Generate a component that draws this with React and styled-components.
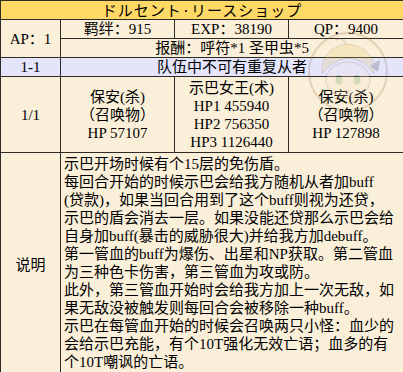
import React from 'react';
import styled, { createGlobalStyle } from 'styled-components';

const GlobalStyle = createGlobalStyle`
    body {
        margin: 0;
        background: #fff;
        font-family: "Liberation Serif", "Noto Sans CJK SC", serif;
    }
`;

const Wrap = styled.div`
    position: relative;
    width: 403px;
`;

const Table = styled.table`
    width: 403px;
    border-collapse: collapse;
    table-layout: fixed;
    font-size: 15px;
    line-height: 18px;
    color: #000;
    background: #faefd9;

    td {
        border: 1px solid #2e2a24;
        padding: 0;
        text-align: center;
        vertical-align: middle;
    }
`;

const TitleCell = styled.td`
    background: #ffd966;
    height: 17px;
    font-family: "Noto Sans CJK JP", sans-serif;
    letter-spacing: 1px;
`;

const Row = styled.tr`
    height: ${props => props.h}px;
    background: ${props => (props.stage ? '#e4e4fb' : 'transparent')};
`;

const Lines = styled.div`
    display: flex;
    flex-direction: column;
    align-items: center;
`;

const DescCell = styled.td`
    && {
        text-align: left;
        vertical-align: top;
        padding: 2px 2px 6px 3px;
    }
`;

const Line = styled.div`
    white-space: nowrap;
`;

const Watermark = styled.svg`
    position: absolute;
    left: 306px;
    top: 30px;
    pointer-events: none;
    opacity: 0.22;
`;

const desc = [
    '示巴开场时候有个15层的免伤盾。',
    '每回合开始的时候示巴会给我方随机从者加buff',
    '(贷款)，如果当回合用到了这个buff则视为还贷，',
    '示巴的盾会消去一层。如果没能还贷那么示巴会给',
    '自身加buff(暴击的威胁很大)并给我方加debuff。',
    '第一管血的buff为爆伤、出星和NP获取。第二管血',
    '为三种色卡伤害，第三管血为攻或防。',
    '此外，第三管血开始时会给我方加上一次无敌，如',
    '果无敌没被触发则每回合会被移除一种buff。',
    '示巴在每管血开始的时候会召唤两只小怪：血少的',
    '会给示巴充能，有个10T强化无效亡语；血多的有',
    '个10T嘲讽的亡语。',
];

const enemies = [
    ['保安(杀)', '（召唤物）', 'HP 57107'],
    ['示巴女王(术)', 'HP1 455940', 'HP2 756350', 'HP3 1126440'],
    ['保安(杀)', '（召唤物）', 'HP 127898'],
];

const App = () => {
    return (
        <Wrap>
            <GlobalStyle />
            <Table>
                <colgroup>
                    <col style={{ width: 60 }} />
                    <col style={{ width: 114 }} />
                    <col style={{ width: 114 }} />
                    <col style={{ width: 115 }} />
                </colgroup>
                <tbody>
                    <tr>
                        <TitleCell colSpan={4}>ドルセント·リースショップ</TitleCell>
                    </tr>
                    <Row h={18}>
                        <td rowSpan={2}>AP：1</td>
                        <td>羁绊：915</td>
                        <td>EXP：38190</td>
                        <td>QP：9400</td>
                    </Row>
                    <Row h={18}>
                        <td colSpan={3}>报酬：呼符*1 圣甲虫*5</td>
                    </Row>
                    <Row h={16} stage>
                        <td>1-1</td>
                        <td colSpan={3}>队伍中不可有重复从者</td>
                    </Row>
                    <Row h={76}>
                        <td>1/1</td>
                        {enemies.map((lines, i) => (
                            <td key={i}>
                                <Lines>
                                    {lines.map((l, j) => <Line key={j}>{l}</Line>)}
                                </Lines>
                            </td>
                        ))}
                    </Row>
                    <Row h={224}>
                        <td>说明</td>
                        <DescCell colSpan={3}>
                            {desc.map((l, i) => <Line key={i}>{l}</Line>)}
                        </DescCell>
                    </Row>
                </tbody>
            </Table>
            <Watermark width="84" height="86" viewBox="0 0 84 86">
                <circle cx="42" cy="42" r="39" fill="none" stroke="#8a6a40" strokeWidth="2" />
                <path d="M16 44 Q14 18 42 14 Q70 18 68 44 Q60 30 42 28 Q26 30 16 44 Z" fill="#e8c860" stroke="#8a6a40" strokeWidth="1" />
                <path d="M40 14 Q36 6 30 10" fill="none" stroke="#8a6a40" strokeWidth="1.5" />
                <ellipse cx="42" cy="50" rx="22" ry="18" fill="#fbe8d8" stroke="#8a6a40" strokeWidth="1" />
                <ellipse cx="33" cy="50" rx="3.5" ry="5" fill="#4a9a50" />
                <ellipse cx="51" cy="50" rx="3.5" ry="5" fill="#4a9a50" />
                <path d="M40 60 Q42 62 44 60" fill="none" stroke="#8a6a40" strokeWidth="1" />
                <path d="M64 36 L74 30 L72 42 Z" fill="#333" />
                <path d="M26 66 Q42 80 58 66" fill="none" stroke="#8a6a40" strokeWidth="1" />
            </Watermark>
        </Wrap>
    );
};

export default App;
